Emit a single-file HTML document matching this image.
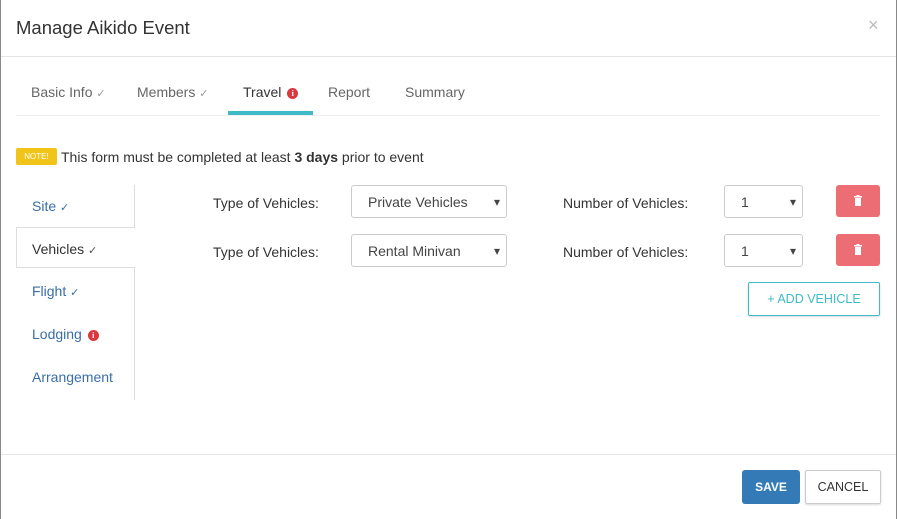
<!DOCTYPE html><html><head><style>
*{box-sizing:border-box;margin:0;padding:0}
body{width:897px;height:519px;background:#fff;font-family:"Liberation Sans",sans-serif;position:relative;overflow:hidden;color:#333}
.a{position:absolute;white-space:nowrap}
.b{border:1px solid #ccc;border-radius:3px;background:#fff}
.chk{font-size:11px;color:#999}
.nav{color:#3a6ea8;font-size:14px}
.info{display:inline-block;width:11px;height:11px;border-radius:50%;background:#d9383f;color:#fff;font-size:8px;font-weight:bold;text-align:center;line-height:11px;vertical-align:1px;margin-left:2px;font-family:"Liberation Serif",serif}
.lbl{font-size:14px;color:#333}
.sel{font-size:14px;color:#444;padding-left:16px;line-height:32px}
.sel:after{content:"▾";position:absolute;right:6px;top:0;font-size:12px;color:#444}
.del{background:#ec6d74;border-radius:3px;width:44px;height:32px}
</style></head><body>
<div class="a" style="left:0;top:0;width:897px;height:519px;border:1px solid #888;border-top:0;border-bottom:0"></div>
<div class="a" style="left:16px;top:17px;font-size:18.5px;color:#333">Manage Aikido Event</div>
<div class="a" style="left:868px;top:15px;font-size:18px;color:#bbb">×</div>
<div class="a" style="left:1px;top:56px;width:895px;border-top:1px solid #e5e5e5"></div>
<div class="a" style="left:31px;top:84px;font-size:14px;color:#666">Basic Info <span class="chk">✓</span></div>
<div class="a" style="left:137px;top:84px;font-size:14px;color:#666">Members <span class="chk">✓</span></div>
<div class="a" style="left:243px;top:84px;font-size:14px;color:#333">Travel <span class="info">i</span></div>
<div class="a" style="left:328px;top:84px;font-size:14px;color:#666">Report</div>
<div class="a" style="left:405px;top:84px;font-size:14px;color:#666">Summary</div>
<div class="a" style="left:16px;top:115px;width:864px;border-top:1px solid #eee"></div>
<div class="a" style="left:228px;top:111px;width:85px;height:4px;background:#3fbac6"></div>
<div class="a" style="left:16px;top:148px;width:41px;height:17px;background:#f0c419;border-radius:2px;color:#fff;font-size:8px;text-align:center;line-height:17px">NOTE!</div>
<div class="a" style="left:61px;top:149px;font-size:14px;color:#333">This form must be completed at least <b>3 days</b> prior to event</div>
<div class="a" style="left:134px;top:185px;height:215px;border-left:1px solid #ddd"></div>
<div class="a" style="left:16px;top:227px;width:119px;height:41px;border:1px solid #ddd;border-right:0;background:#fff"></div>
<div class="a nav" style="left:32px;top:198px">Site <span class="chk" style="color:#3a6ea8">✓</span></div>
<div class="a" style="left:32px;top:241px;font-size:14px;color:#333">Vehicles <span class="chk" style="color:#555">✓</span></div>
<div class="a nav" style="left:32px;top:283px">Flight <span class="chk" style="color:#3a6ea8">✓</span></div>
<div class="a nav" style="left:32px;top:326px">Lodging <span class="info">i</span></div>
<div class="a nav" style="left:32px;top:369px">Arrangement</div>
<div class="a lbl" style="left:213px;top:195px">Type of Vehicles:</div>
<div class="a b sel" style="left:351px;top:185px;width:156px;height:33px">Private Vehicles</div>
<div class="a lbl" style="left:563px;top:195px">Number of Vehicles:</div>
<div class="a b sel" style="left:724px;top:185px;width:79px;height:33px">1</div>
<div class="a del" style="left:836px;top:185px"><svg width="44" height="32"><rect x="19" y="13" width="6" height="8" fill="#fff"/><rect x="18" y="11" width="8" height="1.5" fill="#fff"/><rect x="20.5" y="10" width="3" height="1.5" fill="#fff"/></svg></div>
<div class="a lbl" style="left:213px;top:244px">Type of Vehicles:</div>
<div class="a b sel" style="left:351px;top:234px;width:156px;height:33px">Rental Minivan</div>
<div class="a lbl" style="left:563px;top:244px">Number of Vehicles:</div>
<div class="a b sel" style="left:724px;top:234px;width:79px;height:33px">1</div>
<div class="a del" style="left:836px;top:234px"><svg width="44" height="32"><rect x="19" y="13" width="6" height="8" fill="#fff"/><rect x="18" y="11" width="8" height="1.5" fill="#fff"/><rect x="20.5" y="10" width="3" height="1.5" fill="#fff"/></svg></div>
<div class="a" style="left:748px;top:282px;width:132px;height:34px;border:1px solid #3fbac6;border-radius:2px;color:#3fbac6;font-size:12.5px;text-align:center;line-height:32px;box-shadow:0 1px 2px rgba(0,0,0,.15)">+ ADD VEHICLE</div>
<div class="a" style="left:1px;top:454px;width:895px;border-top:1px solid #e5e5e5"></div>
<div class="a" style="left:742px;top:470px;width:58px;height:34px;background:#337ab7;border-radius:3px;color:#fff;font-size:12px;font-weight:bold;text-align:center;line-height:34px">SAVE</div>
<div class="a" style="left:805px;top:470px;width:76px;height:34px;border:1px solid #ccc;border-radius:2px;color:#333;font-size:12.5px;text-align:center;line-height:32px;box-shadow:0 1px 2px rgba(0,0,0,.15)">CANCEL</div>
</body></html>
